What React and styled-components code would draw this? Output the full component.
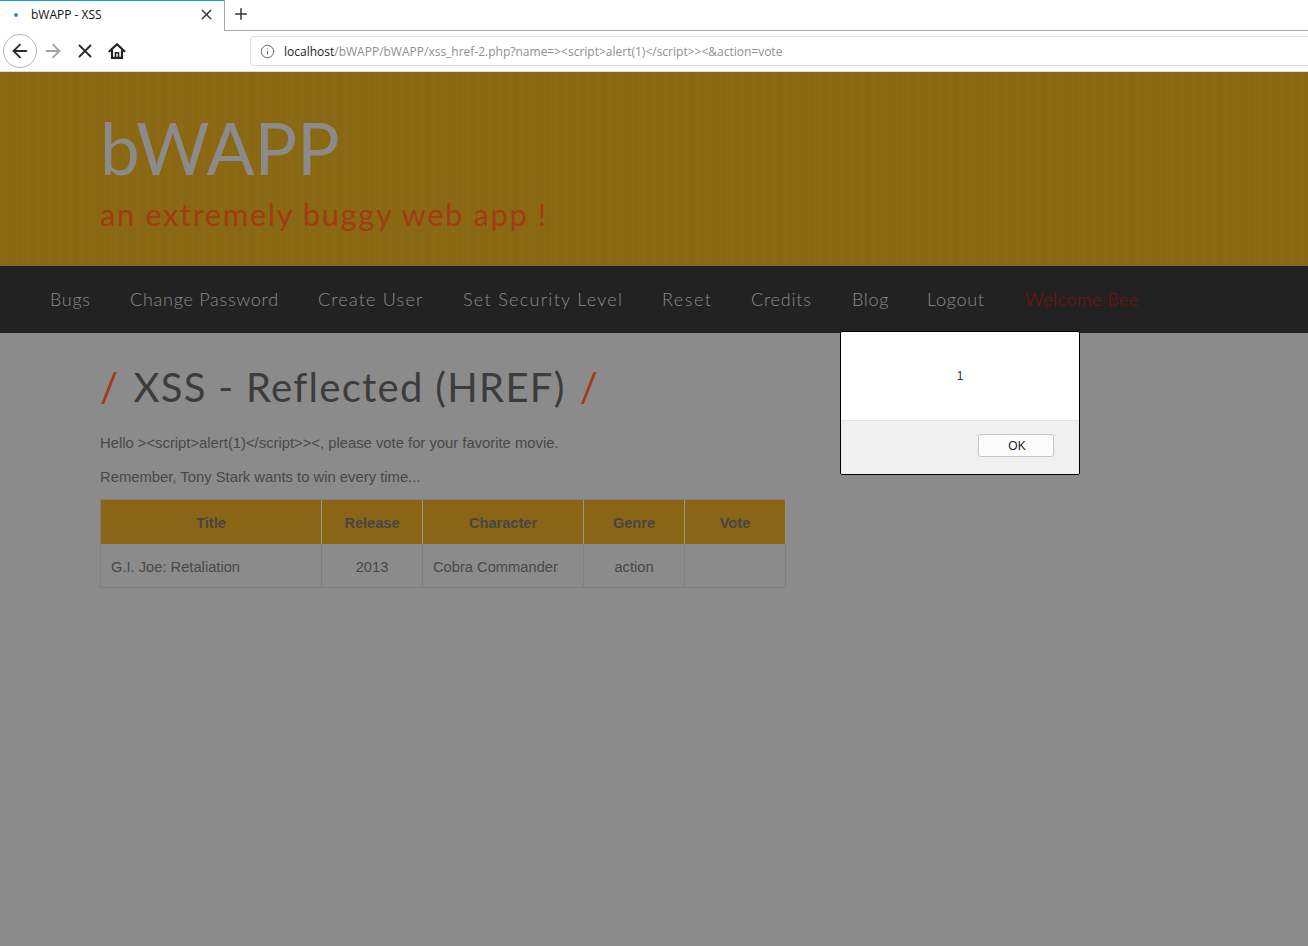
import styled, { createGlobalStyle } from 'styled-components'
import { ArrowLeft, ArrowRight, X, Plus, Info } from 'lucide-react'

const Global = createGlobalStyle`
    html, body {
        margin: 0;
        height: 100%;
        background: #8b8b8b;
        overflow: hidden;
    }
`
const hand = `'Lato', 'Open Sans', sans-serif`

const Page = styled.div`
    position: relative;
    width: 1308px;
    height: 946px;
    overflow: hidden;
    font-family: 'Liberation Sans', Arial, sans-serif;
`
const TabStrip = styled.div`
    display: flex;
    height: 31px;
    background: #fff;
    box-sizing: border-box;
`
const Tab = styled.div`
    display: flex;
    align-items: center;
    width: 225px;
    box-sizing: border-box;
    padding: 0 9px 3px 14px;
    border-top: 1px solid #1a9bf0;
    border-right: 1px solid #a8a8a8;
    font: 12px 'Open Sans', sans-serif;
    color: #111;
`
const TabDot = styled.span`
    width: 4px;
    height: 4px;
    border-radius: 50%;
    background: #2a8cf0;
    margin-right: 13px;
`
const TabTitle = styled.span`
    flex: 1;
`
const StripRest = styled.div`
    flex: 1;
    display: flex;
    align-items: center;
    padding: 0 0 2px 7px;
    border-bottom: 1px solid #a8a8a8;
    color: #333;
`
const Toolbar = styled.div`
    display: flex;
    align-items: center;
    height: 41px;
    box-sizing: border-box;
    background: #fff;
    border-bottom: 1px solid #dcdcdc;
    padding-left: 3px;
`
const NavButton = styled.div`
    display: flex;
    align-items: center;
    justify-content: center;
    flex: none;
    width: ${p => p.$w || 32}px;
    height: 34px;
    color: ${p => p.$muted ? '#a3a3a3' : '#2b2b2b'};
    ${p => p.$round && 'border: 1px solid #b5b5b5; border-radius: 50%; box-sizing: border-box;'}
`
const UrlBar = styled.div`
    display: flex;
    align-items: center;
    flex: none;
    width: 1070px;
    height: 30px;
    margin-left: 117px;
    box-sizing: border-box;
    border: 1px solid #dfe1e5;
    border-radius: 3px;
    padding-left: 9px;
    font: 12px 'Open Sans', sans-serif;
    color: #8f8f8f;
    white-space: nowrap;
`
const Host = styled.span`
    color: #222;
    margin-left: 9px;
`
const Banner = styled.header`
    height: 194px;
    box-sizing: border-box;
    background: repeating-linear-gradient(90deg, #8b6813 0 5px, #8c6914 5px 7px, #8a6813 7px 11px);
    padding: 34px 0 0 100px;
    font-family: ${hand};
`
const Logo = styled.div`
    font-size: 71px;
    font-weight: 400;
    line-height: 84px;
    color: #8b8b8b;
`
const Tagline = styled.div`
    margin-top: 2px;
    font-size: 31px;
    line-height: 44px;
    letter-spacing: 1.55px;
    color: #a03b14;
`
const Menu = styled.nav`
    display: flex;
    align-items: center;
    gap: 40px;
    height: 67px;
    box-sizing: border-box;
    padding: 0 0 2px 50px;
    background: #222;
    font-family: ${hand};
    font-size: 18px;
    font-weight: 300;
`
const MenuItem = styled.span`
    flex: none;
    width: ${p => p.$w}px;
    letter-spacing: ${p => p.$ls}px;
    white-space: nowrap;
    color: ${p => p.$alert ? '#8a0c0c' : '#8b8b8b'};
`
const Main = styled.main`
    padding: 25px 0 0 100px;
    color: #474747;
`
const Heading = styled.h1`
    display: flex;
    gap: 14px;
    margin: 0 0 17px;
    height: 58px;
    align-items: center;
    font-family: ${hand};
    font-size: 40px;
    font-weight: 400;
    letter-spacing: 1.3px;
    color: #3c3c3c;
    white-space: nowrap;
`
const Slash = styled.span`
    color: #a03b14;
`
const Text = styled.p`
    margin: 0;
    height: 34px;
    font-size: 14.8px;
    line-height: 20px;
    color: #484848;
`
const Table = styled.div`
    display: grid;
    grid-template-columns: 221px 101px 161px 101px 101px;
    width: 686px;
    margin-top: -2px;
    border-left: 1px solid #7f7f7f;
    border-top: 1px solid #808080;
    box-sizing: border-box;
`
const HeadCell = styled.div`
    display: flex;
    align-items: center;
    justify-content: center;
    height: 44px;
    padding-top: 2px;
    box-sizing: border-box;
    background: #8a6516;
    border-right: 1px solid #969696;
    font-size: 14.6px;
    font-weight: 700;
    color: #464646;
`
const Cell = styled.div`
    display: flex;
    align-items: center;
    justify-content: ${p => p.$center ? 'center' : 'flex-start'};
    height: 44px;
    padding: 2px 10px 0;
    box-sizing: border-box;
    border-right: 1px solid #7f7f7f;
    border-bottom: 1px solid #7f7f7f;
    font-size: 14.7px;
    color: #484848;
`
const Dialog = styled.div`
    position: absolute;
    left: 840px;
    top: 331px;
    display: flex;
    flex-direction: column;
    width: 240px;
    height: 144px;
    box-sizing: border-box;
    border: 1px solid #000;
    border-radius: 2px;
    background: #fff;
`
const DialogBody = styled.div`
    display: flex;
    align-items: center;
    justify-content: center;
    height: 88px;
    border-bottom: 1px solid #e4e4e4;
    font-size: 12px;
    color: #333;
`
const DialogFoot = styled.div`
    flex: 1;
    display: flex;
    justify-content: flex-end;
    padding: 13px 25px 0 0;
    background: #f0f0f0;
`
const OkButton = styled.button`
    width: 76px;
    height: 23px;
    padding: 0 0 0 2px;
    border: 1px solid #c4c4c4;
    border-radius: 3px;
    background: #fbfbfb;
    font: 12px 'Liberation Sans', Arial, sans-serif;
    color: #222;
`

const menu = [
    ['Bugs', 40, 0.7], ['Change Password', 148, 0.75], ['Create User', 105, 1.2], ['Set Security Level', 159, 1.3],
    ['Reset', 49, 1.5], ['Credits', 61, 0.8], ['Blog', 35, 0.7], ['Logout', 58, 0.7],
]

const HomeIcon = () => (
    <svg width="18" height="18" viewBox="0 0 18 18" fill="none" stroke="#222" strokeWidth="2.2">
        <path d="M1.5 9.2 9 2.2l7.5 7" strokeLinecap="round" strokeLinejoin="round" />
        <path d="M4 8v7.8h10V8" />
        <path d="M7.5 15.8v-5h3v5" strokeWidth="1.6" />
    </svg>
)

const App = () => (
    <Page>
        <Global />
        <TabStrip>
            <Tab>
                <TabDot />
                <TabTitle>bWAPP - XSS</TabTitle>
                <X size={17} color="#333" strokeWidth={2} />
            </Tab>
            <StripRest><Plus size={18} strokeWidth={2} /></StripRest>
        </TabStrip>
        <Toolbar>
            <NavButton $round $w={34}><ArrowLeft size={22} strokeWidth={2} /></NavButton>
            <NavButton $muted><ArrowRight size={22} strokeWidth={2} /></NavButton>
            <NavButton><X size={22} strokeWidth={2} /></NavButton>
            <NavButton><HomeIcon /></NavButton>
            <UrlBar>
                <Info size={15} strokeWidth={1.6} color="#666" />
                <Host>localhost</Host>
                <span>{'/bWAPP/bWAPP/xss_href-2.php?name=><script>alert(1)</script>><&action=vote'}</span>
            </UrlBar>
        </Toolbar>
        <Banner>
            <Logo>bWAPP</Logo>
            <Tagline>an extremely buggy web app !</Tagline>
        </Banner>
        <Menu>
            {menu.map(([label, w, ls]) => <MenuItem key={label} $w={w} $ls={ls}>{label}</MenuItem>)}
            <MenuItem $w={114} $ls={0.55} $alert>Welcome Bee</MenuItem>
        </Menu>
        <Main>
            <Heading><Slash>/</Slash> XSS - Reflected (HREF) <Slash>/</Slash></Heading>
            <Text>{'Hello ><script>alert(1)</script>><, please vote for your favorite movie.'}</Text>
            <Text>Remember, Tony Stark wants to win every time...</Text>
            <Table>
                <HeadCell>Title</HeadCell>
                <HeadCell>Release</HeadCell>
                <HeadCell>Character</HeadCell>
                <HeadCell>Genre</HeadCell>
                <HeadCell>Vote</HeadCell>
                <Cell>G.I. Joe: Retaliation</Cell>
                <Cell $center>2013</Cell>
                <Cell>Cobra Commander</Cell>
                <Cell $center>action</Cell>
                <Cell />
            </Table>
        </Main>
        <Dialog>
            <DialogBody>1</DialogBody>
            <DialogFoot><OkButton>OK</OkButton></DialogFoot>
        </Dialog>
    </Page>
)

export default App
